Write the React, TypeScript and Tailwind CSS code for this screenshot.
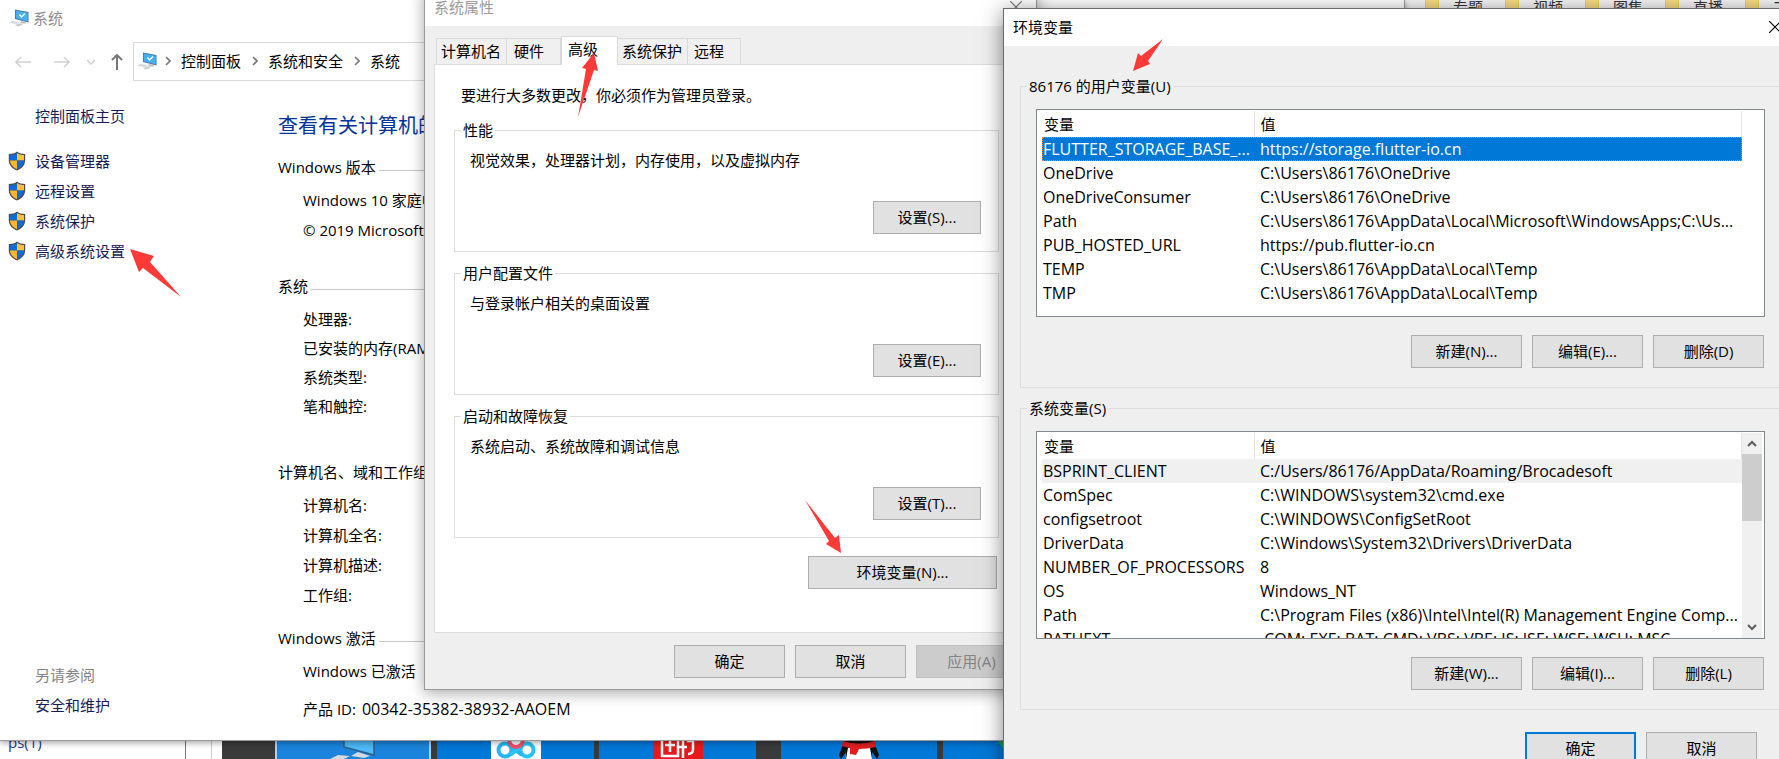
import type { ReactNode } from "react";

type Variable = { name: string; value: string };

const userVars: Variable[] = [
  { name: "FLUTTER_STORAGE_BASE_...", value: "https://storage.flutter-io.cn" },
  { name: "OneDrive", value: "C:\\Users\\86176\\OneDrive" },
  { name: "OneDriveConsumer", value: "C:\\Users\\86176\\OneDrive" },
  { name: "Path", value: "C:\\Users\\86176\\AppData\\Local\\Microsoft\\WindowsApps;C:\\Us..." },
  { name: "PUB_HOSTED_URL", value: "https://pub.flutter-io.cn" },
  { name: "TEMP", value: "C:\\Users\\86176\\AppData\\Local\\Temp" },
  { name: "TMP", value: "C:\\Users\\86176\\AppData\\Local\\Temp" },
];

const systemVars: Variable[] = [
  { name: "BSPRINT_CLIENT", value: "C:/Users/86176/AppData/Roaming/Brocadesoft" },
  { name: "ComSpec", value: "C:\\WINDOWS\\system32\\cmd.exe" },
  { name: "configsetroot", value: "C:\\WINDOWS\\ConfigSetRoot" },
  { name: "DriverData", value: "C:\\Windows\\System32\\Drivers\\DriverData" },
  { name: "NUMBER_OF_PROCESSORS", value: "8" },
  { name: "OS", value: "Windows_NT" },
  { name: "Path", value: "C:\\Program Files (x86)\\Intel\\Intel(R) Management Engine Comp..." },
  { name: "PATHEXT", value: ".COM;.EXE;.BAT;.CMD;.VBS;.VBE;.JS;.JSE;.WSF;.WSH;.MSC" },
];

function PcIcon() {
  return (
    <svg className="w-5 h-[18px] shrink-0" viewBox="0 0 20 18" aria-hidden="true">
      <path d="M3 12 L11 13 L8 15 L0 14 Z" fill="#d5d9dc" />
      <path d="M12 12 L16 13 L18 14.5 L11 14.5 Z" fill="#b7bdc2" />
      <path d="M6 16 L10 14.500 L14 15.500 L9 17.500 Z" fill="#c6cbcf" />
      <path d="M6 0.500 L19.500 3 L19.500 13.500 L6 10 Z" fill="#557086" />
      <path d="M6.800 1.500 L18.700 3.700 L18.700 12.400 L6.800 9.300 Z" fill="#41b0f5" />
      <path d="M10.500 5.500 L12.500 8 L16 4.500" fill="none" stroke="#fff" strokeWidth="1.400" />
    </svg>
  );
}

function Shield() {
  return (
    <svg className="w-[18px] h-5 shrink-0" viewBox="0 0 18 20" aria-hidden="true">
      <path d="M9 .6 C7 2.4 4 3 .8 3 V9 C.8 14 4 17.6 9 19.4 C14 17.6 17.2 14 17.2 9 V3 C14 3 11 2.4 9 .6Z" fill="#4d4d4d" />
      <path d="M9 2 C7 3.5 4.500 4 2 4.100 V9.500 H9Z" fill="#0a6cd6" />
      <path d="M9 2 C11 3.500 13.500 4 16 4.100 V9.500 H9Z" fill="#ffc13b" />
      <path d="M2 9.500 H9 V18.200 C5 16.500 2.200 13.500 2 9.500Z" fill="#ffb52e" />
      <path d="M16 9.500 H9 V18.200 C13 16.500 15.800 13.500 16 9.500Z" fill="#0a6cd6" />
    </svg>
  );
}

function Chevron() {
  return (
    <svg className="w-[6px] h-[10px] shrink-0" viewBox="0 0 6 10" aria-hidden="true">
      <path d="M1 1 L5 5 L1 9" fill="none" stroke="#777" strokeWidth="1.6" />
    </svg>
  );
}

function CloseIcon() {
  return (
    <svg className="w-3 h-3" viewBox="0 0 12 12" aria-hidden="true">
      <path d="M0 0 L12 12 M12 0 L0 12" stroke="currentColor" strokeWidth="1.2" />
    </svg>
  );
}

function Button({ children, className = "w-[111px]", primary = false, disabled = false }: {
  children: ReactNode;
  className?: string;
  primary?: boolean;
  disabled?: boolean;
}) {
  const tone = primary
    ? "border-2 border-[#0078d7] bg-[#e1e1e1]"
    : disabled
      ? "border border-[#bfbfbf] bg-[#cccccc] text-[#838383]"
      : "border border-[#adadad] bg-[#e1e1e1]";
  return (
    <button type="button" disabled={disabled} className={`h-[33px] pb-px shrink-0 whitespace-nowrap ${tone} ${className}`}>
      {children}
    </button>
  );
}

function Info({ title, rows, rowClass = "h-[30px]", className = "" }: {
  title: string;
  rows: string[];
  rowClass?: string;
  className?: string;
}) {
  return (
    <section className={className}>
      <div className="flex items-center gap-[3px] h-[30px] mb-[3px]">
        <h2 className="whitespace-nowrap">{title}</h2>
        <div className="flex-1 h-px mt-[6px] bg-[#c8c8c8]" />
      </div>
      {rows.map((row) => (
        <p key={row} className={`flex items-center pl-[25px] whitespace-nowrap ${rowClass}`}>{row}</p>
      ))}
    </section>
  );
}

function NavBar() {
  return (
    <div className="flex items-center h-[39px] mt-[4px]">
      <div className="flex items-center w-[133px] pl-[15px]">
        <button type="button" aria-label="后退" disabled>
          <svg className="w-4 h-3" viewBox="0 0 16 12"><path d="M16 6 H1 M6 1 L1 6 L6 11" fill="none" stroke="#d2d2d2" strokeWidth="1.600" /></svg>
        </button>
        <button type="button" aria-label="前进" disabled className="ml-[23px]">
          <svg className="w-4 h-3" viewBox="0 0 16 12"><path d="M0 6 H15 M10 1 L15 6 L10 11" fill="none" stroke="#d2d2d2" strokeWidth="1.600" /></svg>
        </button>
        <button type="button" aria-label="最近浏览的位置" disabled className="ml-[17px]">
          <svg className="w-2 h-[6px]" viewBox="0 0 8 6"><path d="M0 1 L4 5 L8 1" fill="none" stroke="#cfcfcf" strokeWidth="1.500" /></svg>
        </button>
        <button type="button" aria-label="上移" className="ml-4">
          <svg className="w-3 h-4" viewBox="0 0 12 16"><path d="M6 16 V1 M1 6 L6 1 L11 6" fill="none" stroke="#777" strokeWidth="2" /></svg>
        </button>
      </div>
      <nav className="flex flex-1 items-center h-[39px] pb-[2px] border border-[#d9d9d9] pl-[3px]">
        <PcIcon />
        <span className="ml-2"><Chevron /></span>
        <a href="#panel" className="ml-[10px]">控制面板</a>
        <span className="ml-[11px]"><Chevron /></span>
        <a href="#security" className="ml-[10px]">系统和安全</a>
        <span className="ml-[11px]"><Chevron /></span>
        <a href="#system" className="ml-[10px]">系统</a>
      </nav>
    </div>
  );
}

function SystemWindow() {
  const links = ["设备管理器", "远程设置", "系统保护", "高级系统设置"];
  return (
    <section className="absolute isolate left-0 top-0 w-[1405px] bg-white border-b border-r border-[#9a9a9a] shadow-[0_2px_6px_rgba(0,0,0,0.35)]">
      <header className="flex items-center gap-1 h-[38px] pb-[2px] pl-[9px] text-[#8d8d8d]">
        <PcIcon />
        <h1>系统</h1>
      </header>
      <NavBar />
      <div className="flex">
        <aside className="flex flex-col w-[278px] pt-5 pb-5 text-[#151c55]">
          <a href="#home" className="flex items-center h-[30px] pl-[35px]">控制面板主页</a>
          <ul className="mt-[15px]">
            {links.map((link) => (
              <li key={link}>
                <a href="#settings" className="flex items-center gap-[9px] h-[30px] pl-2">
                  <Shield />
                  {link}
                </a>
              </li>
            ))}
          </ul>
          <p className="flex items-center h-[30px] pl-[35px] mt-auto text-[#838383]">另请参阅</p>
          <a href="#maintenance" className="flex items-center h-[30px] pl-[35px]">安全和维护</a>
        </aside>
        <main className="flex-1 pt-[30px] pb-4">
          <p className="flex items-center h-[30px] text-[20px] text-[#003399]">查看有关计算机的基本信息</p>
          <Info className="mt-[11px]" title="Windows 版本" rows={["Windows 10 家庭中文版", "© 2019 Microsoft Corporation"]} />
          <Info className="mt-[26px]" title="系统" rowClass="h-[29px]" rows={["处理器:", "已安装的内存(RAM):", "系统类型:", "笔和触控:"]} />
          <Info className="mt-[37px]" title="计算机名、域和工作组设置" rows={["计算机名:", "计算机全名:", "计算机描述:", "工作组:"]} />
          <Info className="mt-[13px]" title="Windows 激活" rows={["Windows 已激活"]} />
          <p className="flex items-center gap-[6px] h-[30px] mt-2 pl-[25px]">
            产品 ID:
            <span className="text-base">00342-35382-38932-AAOEM</span>
          </p>
        </main>
      </div>
    </section>
  );
}

function Group({ title, text, button }: { title: string; text: string; button: string }) {
  return (
    <fieldset className="border border-[#dcdcdc] pl-[15px] pr-[17px] pb-[17px]">
      <legend className="h-[22px] -ml-[9px] px-[2px]">{title}</legend>
      <p className="mt-2">{text}</p>
      <div className="flex justify-end mt-[30px]">
        <Button className="w-[108px]">{button}</Button>
      </div>
    </fieldset>
  );
}

function PropertiesWindow() {
  const tab = "h-[26px] pb-[2px] border border-b-0 border-[#d9d9d9] bg-[#f0f0f0] whitespace-nowrap text-left";
  return (
    <section className="absolute isolate left-[424px] top-[-12px] w-[613px] bg-[#efefef] border border-[#9a9a9a] shadow-[0_3px_14px_rgba(0,0,0,0.35)]">
      <header className="flex items-center justify-between h-[37px] pb-px bg-white pl-[9px] pr-[14px] text-[#9a9a9a]">
        <h2>系统属性</h2>
        <button type="button" aria-label="关闭" className="text-[#777]"><CloseIcon /></button>
      </header>
      <div className="pt-[10px] px-[9px] pb-[11px]">
        <div role="tablist" className="relative z-10 flex items-end pl-[2px] -mb-px">
          <button type="button" role="tab" className={`w-[71px] pl-1 mb-px ${tab}`}>计算机名</button>
          <button type="button" role="tab" className={`w-[54px] pl-[7px] mb-px border-l-0 ${tab}`}>硬件</button>
          <button type="button" role="tab" aria-selected="true" className="w-[57px] h-[29px] pl-[6px] pb-[5px] bg-white border border-b-0 border-[#d9d9d9] text-left">高级</button>
          <button type="button" role="tab" className={`w-[70px] pl-1 mb-px border-l-0 ${tab}`}>系统保护</button>
          <button type="button" role="tab" className={`w-[53px] pl-[6px] mb-px border-l-0 ${tab}`}>远程</button>
        </div>
        <div className="bg-white border border-[#dcdcdc] pt-[19px] pl-[19px] pr-[27px] pb-[43px]">
          <p className="pl-[7px]">要进行大多数更改，你必须作为管理员登录。</p>
          <div className="flex flex-col gap-[10px] mt-[13px]">
            <Group title="性能" text="视觉效果，处理器计划，内存使用，以及虚拟内存" button="设置(S)..." />
            <Group title="用户配置文件" text="与登录帐户相关的桌面设置" button="设置(E)..." />
            <Group title="启动和故障恢复" text="系统启动、系统故障和调试信息" button="设置(T)..." />
          </div>
          <div className="flex justify-end mt-[18px] pr-[2px]">
            <Button className="w-[189px]">环境变量(N)...</Button>
          </div>
        </div>
        <div className="flex justify-end gap-[10px] mt-3">
          <Button>确定</Button>
          <Button>取消</Button>
          <Button disabled>应用(A)</Button>
        </div>
      </div>
    </section>
  );
}

function ScrollBar() {
  return (
    <div className="flex flex-col items-center justify-between w-5 bg-[#f0f0f0]" aria-hidden="true">
      <div className="flex items-center justify-center h-[21px]">
        <svg className="w-[10px] h-[7px]" viewBox="0 0 10 7"><path d="M1 6 L5 2 L9 6" fill="none" stroke="#606060" strokeWidth="2.200" /></svg>
      </div>
      <div className="w-full h-[67px] mb-auto bg-[#cdcdcd]" />
      <div className="flex items-center justify-center h-[21px]">
        <svg className="w-[10px] h-[7px]" viewBox="0 0 10 7"><path d="M1 1 L5 5 L9 1" fill="none" stroke="#606060" strokeWidth="2.200" /></svg>
      </div>
    </div>
  );
}

function VarGroup({ title, vars, firstRow, scroll = false, buttons }: {
  title: string;
  vars: Variable[];
  firstRow: string;
  scroll?: boolean;
  buttons: string[];
}) {
  return (
    <fieldset className="border border-[#dcdcdc] pl-[15px] pr-[14px] pb-[19px]">
      <legend className="h-[22px] -ml-[9px] pl-[2px] pr-[3px]">{title}</legend>
      <div className="flex h-[208px] mt-3 pt-px pl-[5px] pr-[2px] overflow-hidden border border-[#828790] bg-white">
        <table className="flex-1 table-fixed self-start whitespace-nowrap">
          <colgroup>
            <col className="w-[212px]" />
            <col />
          </colgroup>
          <thead>
            <tr className="h-[26px] text-left">
              <th className="p-0 pl-[2px] font-normal border-r border-[#e5e5e5]">变量</th>
              <th className="p-0 pl-[6px] font-normal border-r border-[#e5e5e5]">值</th>
            </tr>
          </thead>
          <tbody className="text-base">
            {vars.map((item, i) => (
              <tr key={item.name} className={`h-6 leading-[22px] ${i === 0 ? firstRow : ""}`}>
                <td className="p-0 pl-px">{item.name}</td>
                <td className="p-0 pl-[6px]">{item.value}</td>
              </tr>
            ))}
          </tbody>
        </table>
        {scroll ? <ScrollBar /> : <div className="w-5" />}
      </div>
      <div className="flex justify-end gap-[10px] mt-[18px] pr-px">
        {buttons.map((label) => (
          <Button key={label}>{label}</Button>
        ))}
      </div>
    </fieldset>
  );
}

function VariablesWindow() {
  return (
    <section className="absolute isolate left-[1003px] -right-[18px] top-2 bg-[#efefef] border border-[#6b6b6b] shadow-[0_4px_20px_rgba(0,0,0,0.5)]">
      <header className="flex items-center justify-between h-[37px] pb-px bg-white pl-[9px] pr-[15px]">
        <h2>环境变量</h2>
        <button type="button" aria-label="关闭"><CloseIcon /></button>
      </header>
      <div className="flex flex-col gap-[9px] pt-[29px] px-4">
        <VarGroup
          title="86176 的用户变量(U)"
          vars={userVars}
          firstRow="bg-[#0078d7] text-white outline-1 outline-dotted -outline-offset-1 outline-[#ff8728]"
          buttons={["新建(N)...", "编辑(E)...", "删除(D)"]}
        />
        <VarGroup
          title="系统变量(S)"
          vars={systemVars}
          firstRow="bg-[#f0f0f0]"
          scroll
          buttons={["新建(W)...", "编辑(I)...", "删除(L)"]}
        />
      </div>
      <div className="flex justify-end gap-[10px] pt-[22px] pr-[39px] pb-3">
        <Button primary>确定</Button>
        <Button>取消</Button>
      </div>
    </section>
  );
}

function Tile({ className, children }: { className: string; children?: ReactNode }) {
  return <div className={`flex justify-center shrink-0 h-5 overflow-hidden ${className}`}>{children}</div>;
}

// Folders and tiles that peek out behind the windows
function Desktop() {
  const folders = ["专题", "视频", "图集", "直播", "工具"];
  return (
    <>
      <div className="absolute left-[1405px] right-0 top-[-4px] flex h-5 pl-5 overflow-hidden bg-[#f6f6f6] text-[#333]">
        {folders.map((name) => (
          <div key={name} className="flex gap-[14px] w-20 shrink-0">
            <div className="w-[14px] h-4 bg-[#f8dc86] border-x border-[#f3cf4e]" />
            <span>{name}</span>
          </div>
        ))}
      </div>
      <div className="absolute inset-x-0 top-[739px] flex h-5 overflow-hidden bg-white">
        <div className="w-[186px] shrink-0 pl-2 border-r border-[#777] text-[#1a3a8f] leading-[6px]">ps(1)</div>
        <div className="w-[26px] shrink-0 border-r border-[#ccc]" />
        <div className="flex flex-1 ml-[10px] bg-[#3a3a3a]">
          <Tile className="w-[156px] ml-[53px] bg-[#1a84dc] border-x-2 border-[#a9d3f3]">
            <svg className="w-[50px] h-5" viewBox="0 0 50 20">
              <path d="M16 0 H46 V16 L16 8Z" fill="#4dbaf9" stroke="#315f84" strokeWidth="1.500" />
              <path d="M10 16 L22 17 L16 20 H2Z" fill="#d6dade" />
              <path d="M30 13 L42 17 L36 19 L23 17Z" fill="#d6dade" />
            </svg>
          </Tile>
          <Tile className="w-[157px] ml-[6px] bg-[#0078d7]">
            <svg className="w-[50px] h-5 bg-white" viewBox="0 0 50 20">
              <circle cx="14" cy="11" r="6.500" fill="none" stroke="#29b6f6" strokeWidth="4" />
              <circle cx="36" cy="11" r="6.500" fill="none" stroke="#29c4f6" strokeWidth="4" />
              <path d="M19 7 L31 16" stroke="#29b6f6" strokeWidth="4" />
              <path d="M31 7 L19 16" stroke="#29c4f6" strokeWidth="4" />
              <path d="M18 1 A7 7 0 0 0 32 1" fill="none" stroke="#f0506e" strokeWidth="4" />
            </svg>
          </Tile>
          <Tile className="w-[157px] ml-[5px] bg-[#0078d7]">
            <svg className="w-[50px] h-5 bg-[#e8191c]" viewBox="0 0 50 20">
              <path d="M9 0 V17 H25 V0 M12 6 H22 M17 2 V13 M30 0 V19 M26 8 H34 M34 2 H40 V10 Q40 15 35 15" fill="none" stroke="#fff" strokeWidth="2.500" />
            </svg>
          </Tile>
          <Tile className="w-[156px] ml-[25px] bg-[#0078d7]">
            <svg className="w-10 h-5" viewBox="0 0 40 20">
              <path d="M6 0 H34 L40 16 L38 20 L33 13 V20 H7 V13 L2 20 L0 16Z" fill="#111" />
              <path d="M9 9 Q20 6 31 9 L33 20 H7Z" fill="#fff" />
              <path d="M4 2 Q20 7 36 2 L37 8 Q28 10 20 10 L17 16 L11 15 V9 L3 7Z" fill="#e02020" />
            </svg>
          </Tile>
          <div className="flex-1 h-5 ml-[6px] pl-[53px] bg-[#0078d7] overflow-hidden">
            <div className="w-12 h-12 -mt-8 rounded-full bg-[#1fb866]" />
          </div>
        </div>
      </div>
    </>
  );
}

function Arrows() {
  const arrows = [
    "130,249 154,256 150,262 181,297 143,268 139,272",
    "594,53 598,71 594,70 578,117 586,69 582,68",
    "841,553 826,544 829,541 805,500 835,538 839,535",
    "1133,71 1138,53 1141,56 1163,39 1148,61 1150,64",
  ];
  return (
    <svg className="absolute left-0 top-0 w-[1779px] h-[759px] pointer-events-none" viewBox="0 0 1779 759" aria-hidden="true">
      {arrows.map((points) => (
        <polygon key={points} points={points} fill="#fc3a38" />
      ))}
    </svg>
  );
}

export default function App() {
  return (
    <div
      lang="zh-CN"
      className="relative w-full h-screen overflow-hidden bg-white text-black text-[15px] leading-[22px] font-['Open_Sans','Noto_Sans_CJK_SC',sans-serif]"
    >
      <Desktop />
      <SystemWindow />
      <PropertiesWindow />
      <VariablesWindow />
      <Arrows />
    </div>
  );
}
